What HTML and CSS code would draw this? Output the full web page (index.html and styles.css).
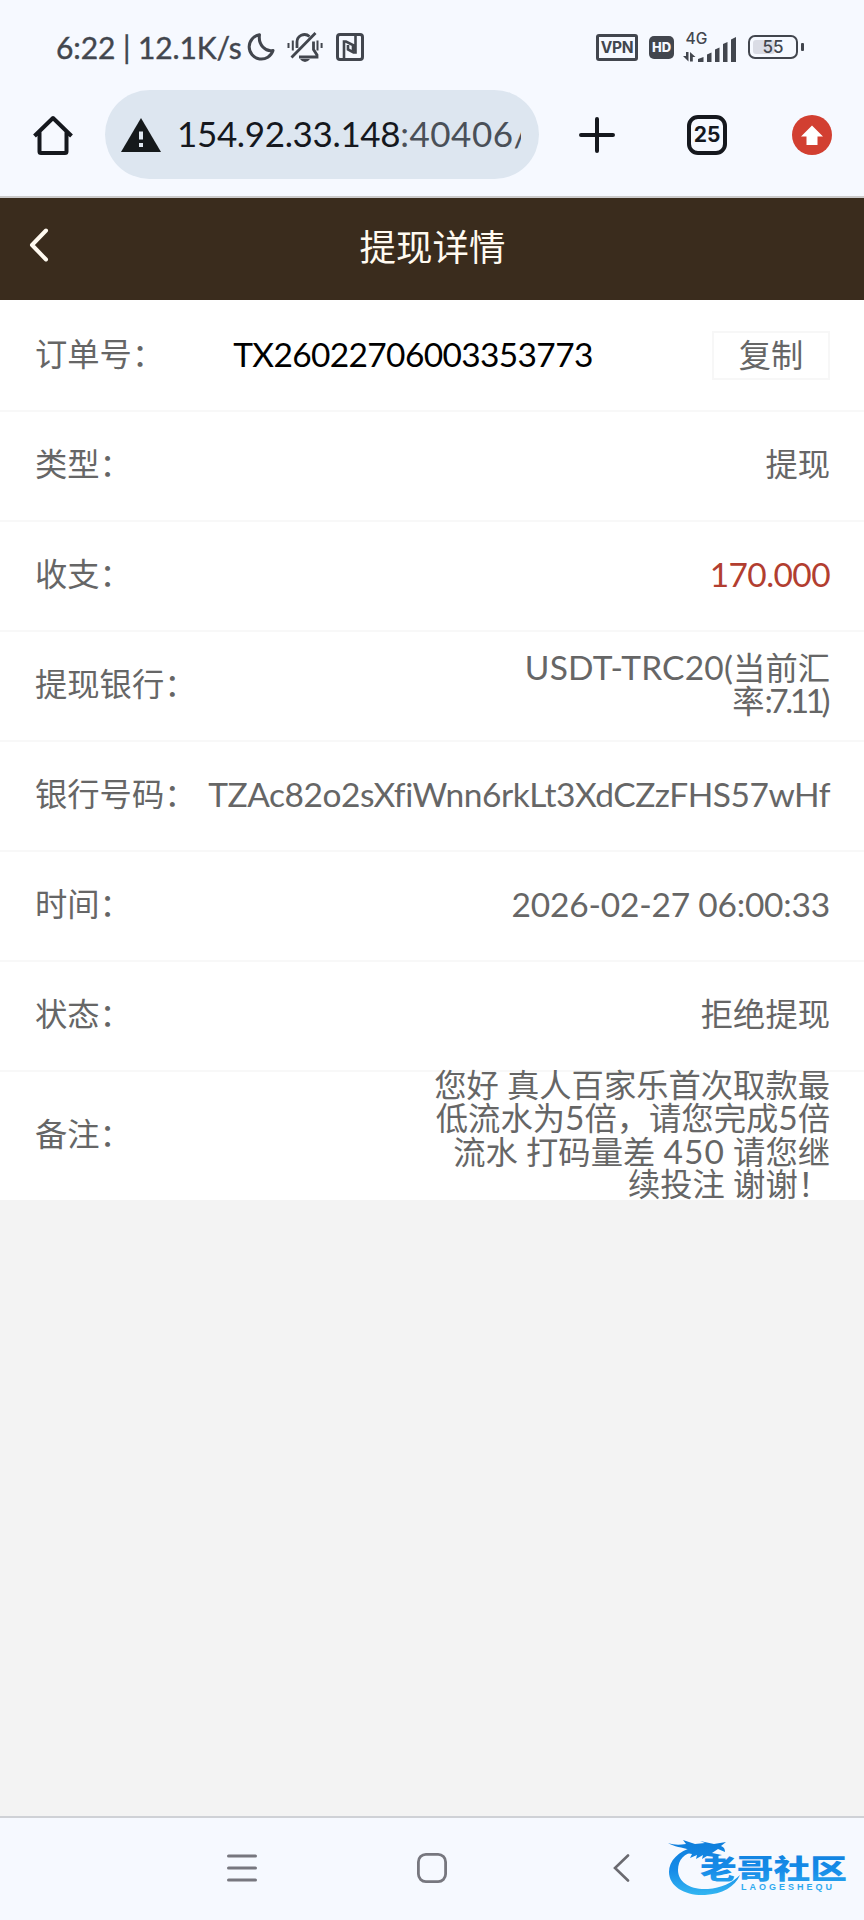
FILE: index.html
```html
<!DOCTYPE html>
<html lang="zh-CN">
<head>
<meta charset="utf-8">
<title>提现详情</title>
<link rel="stylesheet" href="styles.css">
</head>
<body>
<div class="screen">
  <header class="chrome">
    <div class="status">
      <span class="clock">6:22 | 12.1K/s</span>
      <svg class="ic-moon" width="28" height="28" viewBox="0 0 28 28"><path d="M12.500 1.800A12.200 12.200 0 1 0 26 17.500C18.500 19 11 12 12.500 1.800Z" fill="none" stroke="#42464e" stroke-width="3" stroke-linejoin="round"/></svg>
      <svg class="ic-bell" width="36" height="30" viewBox="0 0 36 30" fill="none" stroke="#42464e" stroke-width="2.800"><path d="M4.500 25.500L28.500 1M10 16v-5.500A7.500 7.500 0 0 1 22.500 4.500M26.500 9.500v8l3.500 5.500v2H12"/><path d="M1.500 11v5M5.800 8.500v10M30.500 8.500v10M34.600 11v5" stroke-width="2"/><path d="M13 27h10q-2 3-5 3t-5-3z" fill="#42464e" stroke="none"/></svg>
      <svg class="ic-nfc" width="28" height="28" viewBox="0 0 28 28" fill="none" stroke="#42464e"><rect x="1.500" y="1.500" width="25" height="25" rx="2.500" stroke-width="3"/><path d="M8 26V8.500h2l7 3.500v6M19.500 2v17.500h-2L12 16.500V12" stroke-width="2.600"/></svg>
      <span class="spacer"></span>
      <span class="vpn">VPN</span>
      <span class="hd">HD</span>
      <svg class="ic-signal" width="54" height="38" viewBox="0 -6 54 38"><text x="2.500" y="10" class="net">4G</text><g fill="#42464e"><path d="M3 18h2.500v9.500L0 22h3zM7 27.500V18l5.500 5H9.800v4.500z"/><path d="M15 25l5.500-2v5h-5.500zM24 20.500l4.500-2V28H24zM32 15.500l4.500-2V28H32zM40 10l4.500-2v20H40zM48 5.500l5-2.500v25h-5z"/></g></svg>
      <span class="battery"><i class="charge"></i><b>55</b></span>
    </div>
    <div class="toolbar">
      <svg class="ic-home" width="40" height="42" viewBox="0 0 40 42" fill="none" stroke="#15181e" stroke-width="4"><path d="M1.500 22L20 4l18.500 18M6.500 18v19.500q0 1.500 1.500 1.500h24q1.500 0 1.500-1.500V18" stroke-linejoin="round"/></svg>
      <div class="omnibox">
        <svg width="40" height="34" viewBox="0 0 40 34"><path d="M20 0L40 34H0z" fill="#15191b"/><path d="M18 13.500h4v8h-4zM18 25h4v4h-4z" fill="#e0e8f0"/></svg>
        <span class="url">154.92.33.148<span class="port">:40406/</span></span>
      </div>
      <svg class="ic-plus" width="36" height="36" viewBox="0 0 36 36"><path d="M18 2v32M2 18h32" stroke="#15181e" stroke-width="4" stroke-linecap="round"/></svg>
      <span class="tabs">25</span>
      <svg class="ic-update" width="40" height="40" viewBox="0 0 40 40"><circle cx="20" cy="20" r="20" fill="#d23f31"/><path d="M20 10.500L31 21.500h-5.500V30h-11v-8.500H9z" fill="#fff"/></svg>
    </div>
  </header>

  <div class="titlebar">
    <svg class="ic-back" width="20" height="34" viewBox="0 0 20 34"><path d="M17 2.500L3 17l14 14.500" fill="none" stroke="#fffaf0" stroke-width="4" stroke-linecap="round" stroke-linejoin="round"/></svg>
    <h1>提现详情</h1>
  </div>

  <main class="details">
    <div class="row"><span class="label">订单号：</span><span class="order">TX26022706003353773</span><button class="copy">复制</button></div>
    <div class="row"><span class="label">类型：</span><span class="value">提现</span></div>
    <div class="row"><span class="label">收支：</span><span class="value amount">170.000</span></div>
    <div class="row"><span class="label">提现银行：</span><span class="value"><span class="bank">USDT-TRC20(</span>当前汇<br>率<span class="rate">:7.11)</span></span></div>
    <div class="row"><span class="label">银行号码：</span><span class="value address">TZAc82o2sXfiWnn6rkLt3XdCZzFHS57wHf</span></div>
    <div class="row"><span class="label">时间：</span><span class="value time">2026-02-27 06:00:33</span></div>
    <div class="row"><span class="label">状态：</span><span class="value">拒绝提现</span></div>
    <div class="row remark"><span class="label">备注：</span><span class="value">您好 真人百家乐首次取款最<br>低流水为<span class="num">5</span>倍，请您完成<span class="num">5</span>倍<br>流水 打码量差 <span class="num sum">450</span> 请您继<br>续投注 谢谢！</span></div>
  </main>

  <nav class="navbar">
    <svg class="ic-menu" width="30" height="28" viewBox="0 0 30 28"><path d="M1.500 2h27M1.500 14h27M1.500 26h27" stroke="#77777f" stroke-width="3" stroke-linecap="round"/></svg>
    <svg class="ic-square" width="30" height="30" viewBox="0 0 30 30"><rect x="1.400" y="1.400" width="27.200" height="27.200" rx="7.500" fill="none" stroke="#77777f" stroke-width="2.800"/></svg>
    <svg class="ic-prev" width="17" height="28" viewBox="0 0 17 28"><path d="M15 1.500L2 14l13 12.500" fill="none" stroke="#6a6a70" stroke-width="2.600" stroke-linecap="round"/></svg>
    <svg class="logo" width="180" height="58" viewBox="0 0 180 58">
      <defs><linearGradient id="sea" gradientUnits="userSpaceOnUse" x1="0" y1="4" x2="0" y2="58"><stop offset="0" stop-color="#0f7fdc"/><stop offset=".5" stop-color="#168be8"/><stop offset="1" stop-color="#35b9f2"/></linearGradient></defs>
      <g fill="url(#sea)">
        <path d="M26 8C10 12 1 22 1 33c0 15 17 24 36 23 17-1 30-8 35-20-8 8-19 13-32 14C22 51 10 43 10 31 10 21 16 14 28 12z"/>
        <path d="M0 4c6 2 11 2 18 1l-3-4 12 4 10-1-5-2 14 3 12-2-5 4c3 1 4 3 4 6l-7-3-6 4 10 2-7 2-8-1-5 3 1-4-7 4 1-4-7 3 2-4-6-1 4-3C14 8 6 8 0 4z"/>
        <text x="32" y="40" class="brand" textLength="147" lengthAdjust="spacingAndGlyphs">老哥社区</text>
        <text x="73" y="51" class="brand-sub" textLength="91">LAOGESHEQU</text>
      </g>
    </svg>
  </nav>
</div>
</body>
</html>
```
FILE: styles.css
```css
* { box-sizing: border-box; }
body { margin: 0; }
.screen {
  width: 864px; height: 1920px; display: flex; flex-direction: column;
  background: #f3f3f3; overflow: hidden;
  font-family: Lato, "Noto Sans CJK SC", sans-serif; color: #666;
}
svg, .vpn, .hd, .battery, .tabs { flex: none; display: block; }

.chrome { height: 198px; background: #f6f9ff; border-bottom: 2px solid #cbcaca; }
.status { height: 90px; padding: 4px 0 0 56px; display: flex; align-items: center; color: #42464e; }
.clock { width: 190px; font-size: 30px; letter-spacing: -.1px; white-space: nowrap; -webkit-text-stroke: .4px; }
.ic-moon { margin-left: 1px; }
.ic-bell { margin-left: 12px; }
.ic-nfc { margin-left: 13px; }
.spacer { flex: 1; }
.vpn { width: 42px; height: 27px; border: 3px solid; border-radius: 3px; font: 700 15.500px/21px Inter, sans-serif; letter-spacing: -.3px; text-align: center; }
.hd { width: 25px; height: 23px; margin-left: 11px; border-radius: 5px; background: #42464e; color: #f6f9ff; font: 800 13px/23px Inter, sans-serif; text-align: center; }
.ic-signal { margin-left: 9px; }
.net { font: 500 15.500px Inter, sans-serif; fill: #42464e; }
.battery { position: relative; width: 50px; height: 24px; margin: 0 66px 0 11px; border: 2.500px solid; border-radius: 7px; padding: 3px; }
.battery::after { content: ""; position: absolute; right: -8px; top: 6px; width: 3px; height: 8px; border-radius: 1px; background: #42464e; }
.charge { display: block; width: 22px; height: 14px; border-radius: 3px; background: #dadce5; }
.battery b { position: absolute; inset: 0; font: 500 17px/20px Inter, sans-serif; text-align: center; }

.toolbar { height: 89px; display: flex; align-items: center; padding-left: 33px; }
.omnibox { width: 434px; height: 89px; margin-left: 32px; border-radius: 45px; background: #dde6f0; display: flex; align-items: center; padding-left: 16px; }
.url { width: 344px; margin: 0 0 3px 16px; font-size: 35px; letter-spacing: -.35px; line-height: 44px; color: #15181e; white-space: nowrap; overflow: hidden; }
.port { color: #4a5058; letter-spacing: .5px; }
.ic-plus { margin-left: 40px; }
.tabs { width: 40px; height: 40px; margin-left: 72px; border: 4px solid #15181e; border-radius: 11px; color: #15181e; font: 700 21px/32px Inter, sans-serif; text-align: center; }
.ic-update { margin-left: 65px; }

.titlebar { height: 102px; background: #3a2c1d; display: flex; align-items: center; padding-left: 29px; }
.ic-back { margin-bottom: 8px; }
h1 { flex: 1; margin: 0 48px 4px 0; text-align: center; color: #fffaf0; font-size: 36.500px; font-weight: 400; line-height: 50px; }

.details { background: #fff; }
.row { height: 110px; padding: 0 34px 2px 35px; display: flex; align-items: center; justify-content: space-between; font-size: 32.300px; line-height: 32.300px; }
.row + .row { box-shadow: inset 0 2px #f8f8f8; }
.label { white-space: nowrap; }
.value { text-align: right; white-space: nowrap; }
.order { flex: 1; margin-left: 69px; color: #000; font-size: 33.500px; letter-spacing: -.65px; }
.copy { width: 118px; height: 49px; margin-top: 2px; padding: 0 0 1px; border: 2px solid #f7f7f7; background: #fff; color: #666; font: inherit; line-height: 44px; }
.bank, .rate, .num, .address, .time, .amount { font-size: 33.500px; }
.amount { color: #b23e30; letter-spacing: -.6px; }
.bank { letter-spacing: .2px; }
.rate { letter-spacing: -3.500px; margin-right: 3px; }
.address { letter-spacing: -.45px; }
.time { letter-spacing: -.2px; }
.sum { letter-spacing: 1px; }
.remark { height: 130px; padding-bottom: 1px; line-height: 32.200px; }

.navbar { height: 104px; margin-top: auto; background: #f6f9ff; border-top: 2px solid #cfd1d6; display: flex; align-items: center; padding: 0 0 2px 227px; }
.ic-square { margin-left: 160px; }
.ic-prev { margin-left: 166px; }
.logo { margin-left: 38px; }
.brand { font: 900 27px "Noto Sans CJK SC", sans-serif; }
.brand-sub { font: 700 9px "Liberation Sans", sans-serif; }
```
